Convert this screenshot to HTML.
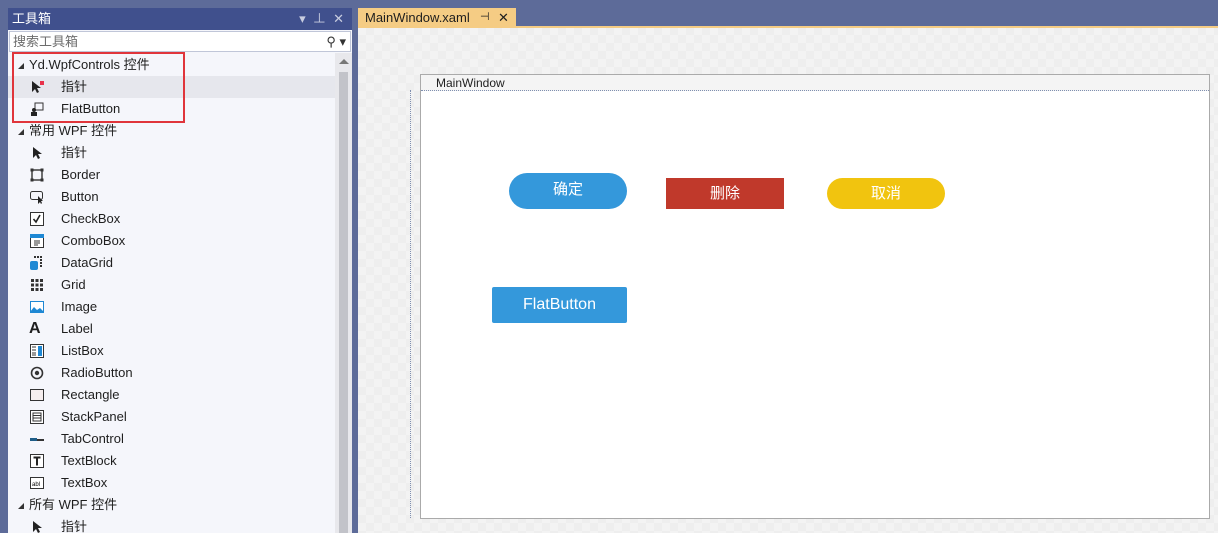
<!DOCTYPE html>
<html><head><meta charset="utf-8"><style>
*{margin:0;padding:0;box-sizing:border-box}
html{width:1218px;height:533px;overflow:hidden}
body{width:1218px;height:533px;background:#5d6b99;position:relative;overflow:hidden;font-family:"Liberation Sans","Noto Sans CJK SC",sans-serif;font-size:13px;color:#1e1e1e}
.abs{position:absolute}
#panel{left:8px;top:8px;width:344px;height:525px;background:#f5f6fb;overflow:hidden}
#ptitle{left:0;top:0;width:344px;height:22px;background:#40508d;color:#fff;font-size:13px;line-height:21px;padding-left:4px}
#search{left:1px;top:23px;width:342px;height:21px;background:#fff;border:1px solid #c0c6d8;color:#6d6d6d;line-height:19px;padding-left:3px}
.row{position:absolute;left:0;width:327px;height:22px;line-height:22px}
.hdr{padding-left:21px}
.hdr:before{content:"";position:absolute;left:10px;top:9px;border-left:6px solid transparent;border-bottom:6px solid #333}
.it{padding-left:53px}
.ic{position:absolute;left:22px;top:4px;width:14px;height:14px}
#sb{left:327px;top:45px;width:17px;height:480px;background:#e8e8ec}
#thumb{left:331px;top:64px;width:9px;height:461px;background:#c2c3c9}
#doc{left:358px;top:27px;width:860px;height:506px;background:#f3f3f3;
background-image:linear-gradient(45deg,#eeeeee 25%,transparent 25%,transparent 75%,#eeeeee 75%),linear-gradient(45deg,#eeeeee 25%,transparent 25%,transparent 75%,#eeeeee 75%);background-size:16px 16px;background-position:0 0,8px 8px}
#tab{left:358px;top:8px;width:158px;height:20px;background:#f5cc84;line-height:19px;padding-left:7px;font-size:13px}
#tabline{left:358px;top:26px;width:860px;height:2px;background:#f5cc84}
#win{left:420px;top:74px;width:790px;height:445px;background:#fff;border:1px solid #aaa}
#wtitle{left:0;top:0;width:788px;height:16px;background:#f4f4f4;border-bottom:1px dotted #7f8fb0;font-size:12px;line-height:16px;padding-left:15px}
.btn{position:absolute;color:#fff;text-align:center;font-size:15px}
</style></head><body>
<div id="panel" class="abs">
  <div id="ptitle" class="abs">工具箱<span style="position:absolute;right:8px;top:0;font-size:13px;color:#c8cde0">▾&nbsp;&nbsp;⊥&nbsp;&nbsp;✕</span></div>
  <div id="search" class="abs">搜索工具箱<span style="position:absolute;right:4px;top:0;color:#333">⚲ ▾</span></div>
  <div id="sb" class="abs"><div style="position:absolute;left:4px;top:6px;border-left:5px solid transparent;border-right:5px solid transparent;border-bottom:5px solid #777"></div></div>
  <div id="thumb" class="abs"></div>
  <div class="row hdr" style="top:46px">Yd.WpfControls 控件</div>
  <div class="row it" style="top:68px;background:#e6e7ed"><svg class="ic" viewBox="0 0 14 14"><path d="M2 1v11l3-3 2 4 2-1-2-4h4z" fill="#222"/><rect x="10" y="1" width="4" height="4" fill="#e8324b"/></svg>指针</div>
  <div class="row it" style="top:90px"><svg class="ic" viewBox="0 0 14 14"><rect x="5" y="1" width="8" height="7" fill="none" stroke="#333"/><circle cx="4" cy="8" r="2" fill="#222"/><rect x="1" y="10" width="6" height="4" fill="#222"/></svg>FlatButton</div>
  <div class="row hdr" style="top:112px">常用 WPF 控件</div>
  <div class="row it" style="top:134px"><svg class="ic" viewBox="0 0 14 14"><path d="M3 1v11l3-3 2 4 2-1-2-4h4z" fill="#222"/></svg>指针</div>
  <div class="row it" style="top:156px"><svg class="ic" viewBox="0 0 14 14"><rect x="2" y="2" width="10" height="10" fill="none" stroke="#333" stroke-width="1.4"/><rect x="0.5" y="0.5" width="3" height="3" fill="#333"/><rect x="10.5" y="0.5" width="3" height="3" fill="#333"/><rect x="0.5" y="10.5" width="3" height="3" fill="#333"/><rect x="10.5" y="10.5" width="3" height="3" fill="#333"/></svg>Border</div>
  <div class="row it" style="top:178px"><svg class="ic" viewBox="0 0 14 14"><rect x="0.5" y="1.5" width="12" height="8" rx="2" fill="none" stroke="#333"/><path d="M8 6v8l2-2 1 2 1-1-1-2h2z" fill="#222"/></svg>Button</div>
  <div class="row it" style="top:200px"><svg class="ic" viewBox="0 0 14 14"><rect x="0.5" y="0.5" width="13" height="13" fill="#fff" stroke="#333"/><path d="M3.5 7l2.5 3 4-7" fill="none" stroke="#222" stroke-width="1.6"/></svg>CheckBox</div>
  <div class="row it" style="top:222px"><svg class="ic" viewBox="0 0 14 14"><rect x="0.5" y="0.5" width="13" height="13" fill="#fff" stroke="#333"/><rect x="0" y="0" width="14" height="4" fill="#1e88d4"/><path d="M4 7h6M4 9h6M4 11h4" stroke="#333"/></svg>ComboBox</div>
  <div class="row it" style="top:244px"><svg class="ic" viewBox="0 0 14 14"><rect x="0" y="5" width="8" height="9" rx="2" fill="#1e88d4"/><g fill="#333"><rect x="4" y="0" width="2" height="2"/><rect x="7" y="0" width="2" height="2"/><rect x="10" y="0" width="2" height="2"/><rect x="10" y="3" width="2" height="2"/><rect x="10" y="6" width="2" height="2"/><rect x="10" y="9" width="2" height="2"/></g></svg>DataGrid</div>
  <div class="row it" style="top:266px"><svg class="ic" viewBox="0 0 14 14"><g fill="#333"><rect x="1" y="1" width="3" height="3"/><rect x="5.5" y="1" width="3" height="3"/><rect x="10" y="1" width="3" height="3"/><rect x="1" y="5.5" width="3" height="3"/><rect x="5.5" y="5.5" width="3" height="3"/><rect x="10" y="5.5" width="3" height="3"/><rect x="1" y="10" width="3" height="3"/><rect x="5.5" y="10" width="3" height="3"/><rect x="10" y="10" width="3" height="3"/></g></svg>Grid</div>
  <div class="row it" style="top:288px"><svg class="ic" viewBox="0 0 14 14"><rect x="0.5" y="1.5" width="13" height="11" fill="#fff" stroke="#1e88d4"/><path d="M0 12l4-5 3 3 3-2 4 4z" fill="#1e88d4"/></svg>Image</div>
  <div class="row it" style="top:310px"><span style="position:absolute;left:21px;top:0;font-weight:bold;font-size:16px">A</span>Label</div>
  <div class="row it" style="top:332px"><svg class="ic" viewBox="0 0 14 14"><rect x="0.5" y="0.5" width="13" height="13" fill="#fff" stroke="#333"/><path d="M2 3h4M2 6h4M2 9h4M2 11h4" stroke="#333"/><rect x="8" y="2" width="4" height="10" fill="#1e88d4"/></svg>ListBox</div>
  <div class="row it" style="top:354px"><svg class="ic" viewBox="0 0 14 14"><circle cx="7" cy="7" r="5.5" fill="none" stroke="#333" stroke-width="1.6"/><circle cx="7" cy="7" r="2.2" fill="#333"/></svg>RadioButton</div>
  <div class="row it" style="top:376px"><svg class="ic" viewBox="0 0 14 14"><rect x="0.5" y="1.5" width="13" height="11" fill="#f6eeee" stroke="#333"/></svg>Rectangle</div>
  <div class="row it" style="top:398px"><svg class="ic" viewBox="0 0 14 14"><rect x="0.5" y="0.5" width="13" height="13" fill="#fff" stroke="#333"/><rect x="3" y="3" width="8" height="8" fill="none" stroke="#333"/><path d="M3 5.5h8M3 8h8" stroke="#333"/></svg>StackPanel</div>
  <div class="row it" style="top:420px"><svg class="ic" viewBox="0 0 14 14"><rect x="0" y="6" width="7" height="3" fill="#1e5d88"/><rect x="7" y="7" width="7" height="2" fill="#333"/></svg>TabControl</div>
  <div class="row it" style="top:442px"><svg class="ic" viewBox="0 0 14 14"><rect x="0.5" y="0.5" width="13" height="13" fill="#fff" stroke="#333"/><path d="M3.5 3.5h7M7 3.5v8" stroke="#222" stroke-width="2"/></svg>TextBlock</div>
  <div class="row it" style="top:464px"><svg class="ic" viewBox="0 0 14 14"><rect x="0.5" y="1.5" width="13" height="11" fill="#fff" stroke="#333"/><text x="2" y="10" font-size="6" font-family="Liberation Sans">abl</text></svg>TextBox</div>
  <div class="row hdr" style="top:486px">所有 WPF 控件</div>
  <div class="row it" style="top:508px"><svg class="ic" viewBox="0 0 14 14"><path d="M3 1v11l3-3 2 4 2-1-2-4h4z" fill="#222"/></svg>指针</div>
</div>
<div class="abs" style="left:12px;top:52px;width:173px;height:71px;border:2px solid #e0353b"></div>
<div id="doc" class="abs"></div>
<div id="tab" class="abs">MainWindow.xaml<span style="position:absolute;left:122px;top:0;font-size:11px">⊣</span><span style="position:absolute;left:140px;top:0">✕</span></div>
<div id="tabline" class="abs"></div>
<div class="abs" style="left:410px;top:90px;width:1px;height:428px;border-left:1px dotted #7f8fb0"></div>
<div id="win" class="abs">
  <div id="wtitle" class="abs">MainWindow</div>
  <div class="btn" style="left:88px;top:98px;width:118px;height:36px;border-radius:18px;background:#3498db;line-height:34px">确定</div>
  <div class="btn" style="left:245px;top:103px;width:118px;height:31px;background:#c0392b;line-height:31px">删除</div>
  <div class="btn" style="left:406px;top:103px;width:118px;height:31px;border-radius:16px;background:#f1c40f;line-height:31px">取消</div>
  <div class="btn" style="left:71px;top:212px;width:135px;height:36px;border-radius:2px;background:#3498db;line-height:35px;font-size:16px">FlatButton</div>
</div>
</body></html>
